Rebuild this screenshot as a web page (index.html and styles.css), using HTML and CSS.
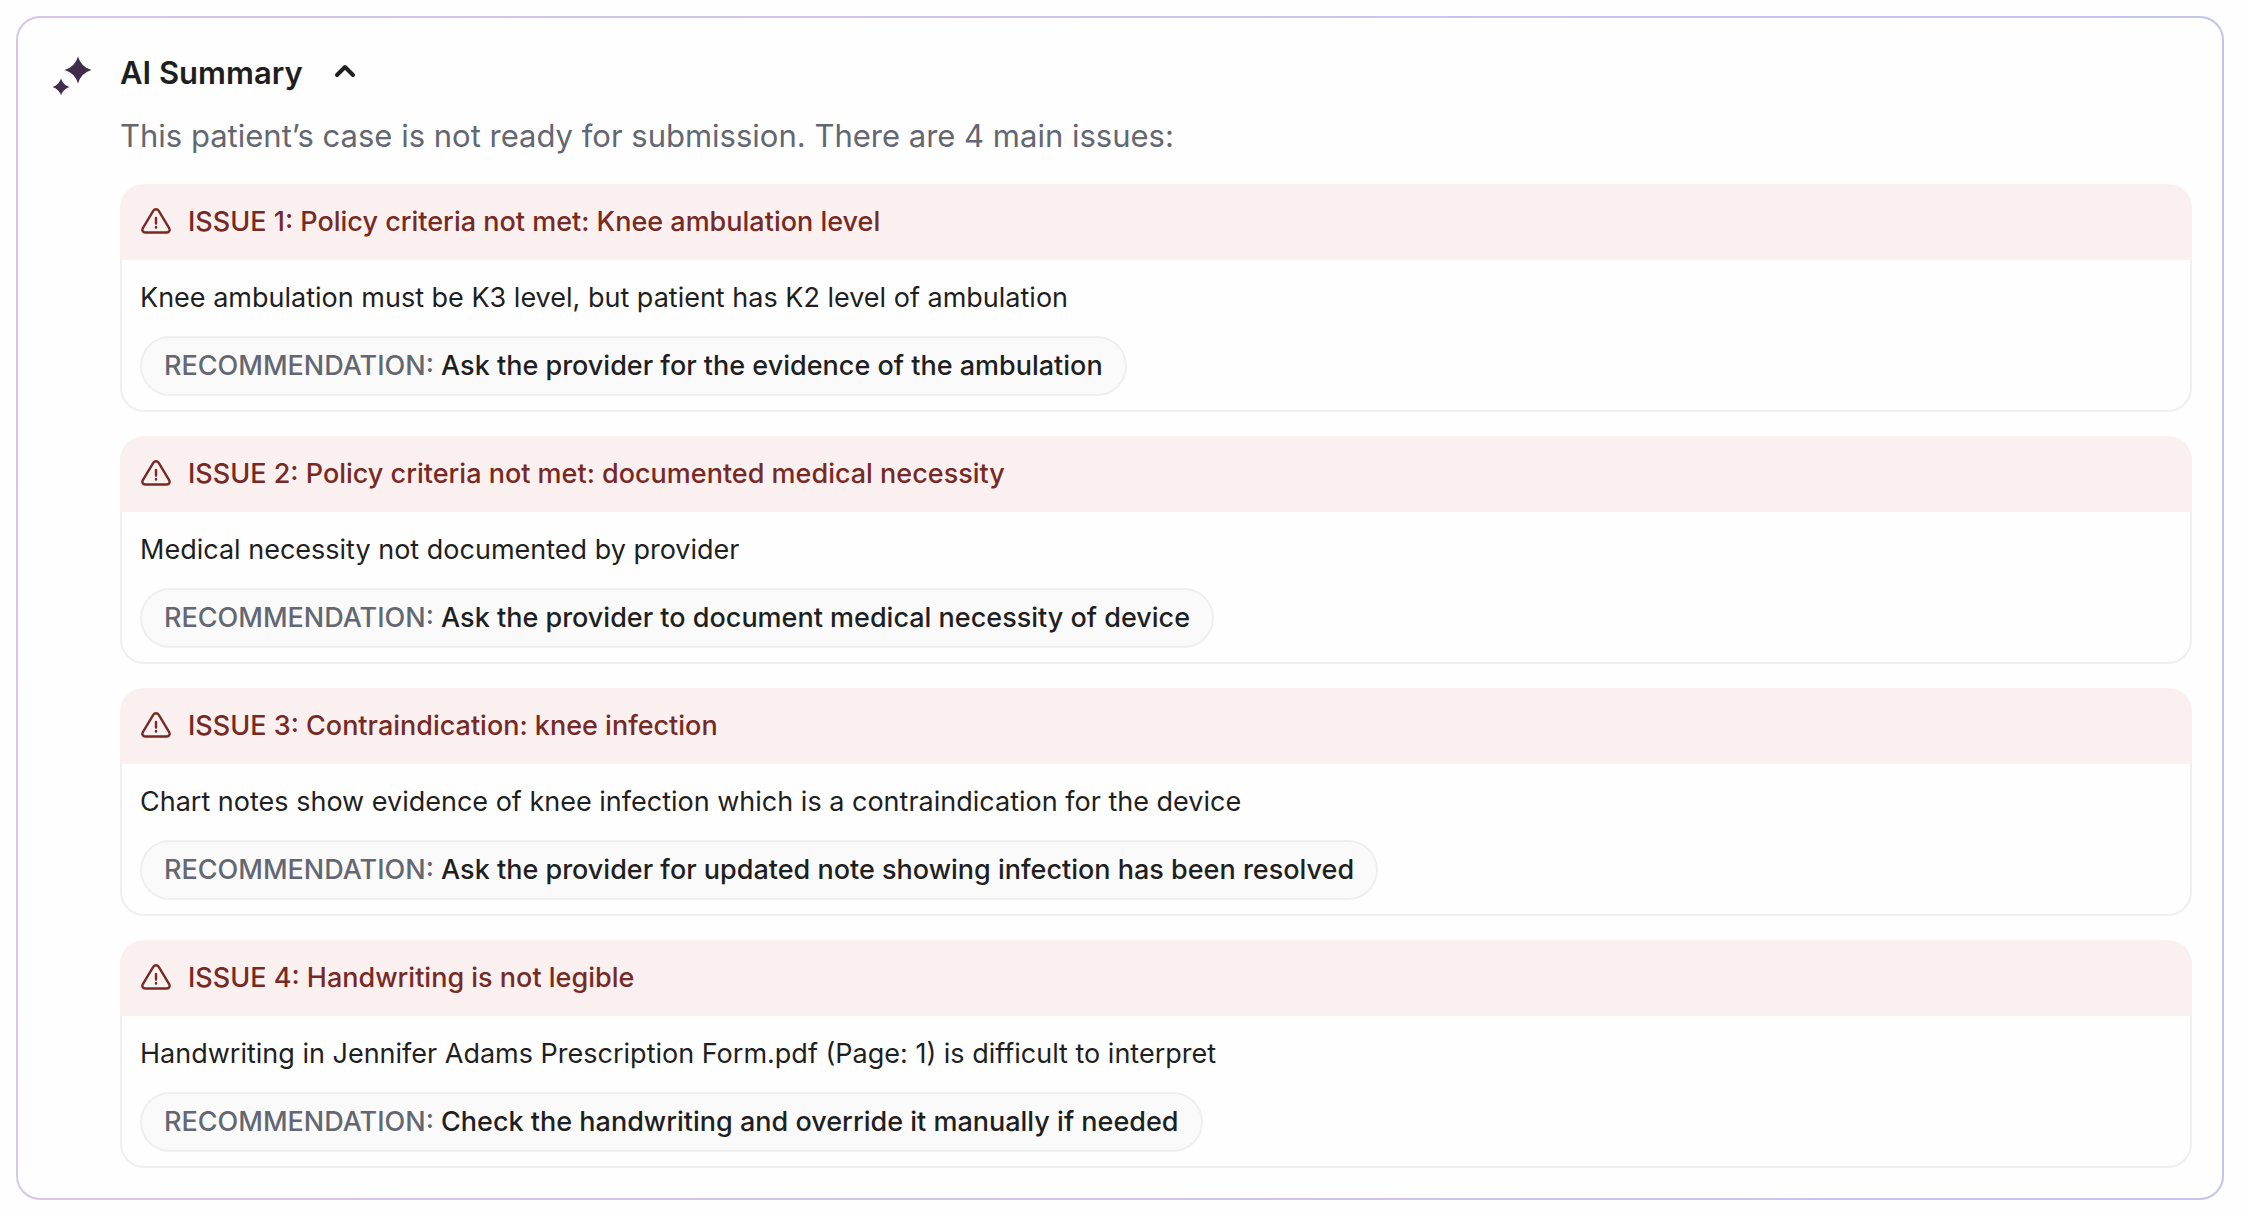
FILE: index.html
```html
<!DOCTYPE html>
<html lang="en">
<head>
    <meta charset="UTF-8">
    <meta name="viewport" content="width=device-width, initial-scale=1.0">
    <title>AI Summary</title>
    <link rel="stylesheet" href="styles.css">
</head>
<body>
    <svg class="sprite" aria-hidden="true">
        <symbol id="icon-alert" viewBox="0 0 32 32">
            <path d="M13.4 4.700 2.700 22.300a2.800 2.800 0 0 0 2.400 4.200h21.800a2.800 2.800 0 0 0 2.400-4.200L18.600 4.700a3 3 0 0 0-5.200 0Z"/>
            <path d="M16 12v5.500M16 21v.5"/>
        </symbol>
    </svg>

    <section class="summary">
        <svg class="sparkle-icon" viewBox="0 0 44 44" aria-hidden="true">
            <path d="M30 8.500Q33 19 43.500 22 33 25 30 35.500 27 25 16.500 22 27 19 30 8.500Z"/>
            <path d="M13 30.500Q15 37 21.500 39 15 41 13 47.500 11 41 4.500 39 11 37 13 30.500Z"/>
        </svg>

        <div class="summary-content">
            <h2 class="summary-title">
                <button class="toggle-btn" type="button" aria-expanded="true" aria-controls="issues">
                    AI Summary
                    <svg class="chevron-icon" viewBox="0 0 24 24" aria-hidden="true">
                        <path d="M4 14 12 6l8 8"/>
                    </svg>
                </button>
            </h2>
            <p class="summary-text">This patient’s case is not ready for submission. There are 4 main issues:</p>

            <div class="issues" id="issues">
                <article class="issue">
                    <h3 class="issue-header">
                        <svg class="alert-icon" aria-hidden="true"><use href="#icon-alert"/></svg>
                        ISSUE 1: Policy criteria not met: Knee ambulation level
                    </h3>
                    <div class="issue-body">
                        <p>Knee ambulation must be K3 level, but patient has K2 level of ambulation</p>
                        <p class="recommendation"><span class="label">RECOMMENDATION:</span> Ask the provider for the evidence of the ambulation</p>
                    </div>
                </article>

                <article class="issue">
                    <h3 class="issue-header">
                        <svg class="alert-icon" aria-hidden="true"><use href="#icon-alert"/></svg>
                        ISSUE 2: Policy criteria not met: documented medical necessity
                    </h3>
                    <div class="issue-body">
                        <p>Medical necessity not documented by provider</p>
                        <p class="recommendation"><span class="label">RECOMMENDATION:</span> Ask the provider to document medical necessity of device</p>
                    </div>
                </article>

                <article class="issue">
                    <h3 class="issue-header">
                        <svg class="alert-icon" aria-hidden="true"><use href="#icon-alert"/></svg>
                        ISSUE 3: Contraindication: knee infection
                    </h3>
                    <div class="issue-body">
                        <p>Chart notes show evidence of knee infection which is a contraindication for the device</p>
                        <p class="recommendation"><span class="label">RECOMMENDATION:</span> Ask the provider for updated note showing infection has been resolved</p>
                    </div>
                </article>

                <article class="issue">
                    <h3 class="issue-header">
                        <svg class="alert-icon" aria-hidden="true"><use href="#icon-alert"/></svg>
                        ISSUE 4: Handwriting is not legible
                    </h3>
                    <div class="issue-body">
                        <p>Handwriting in Jennifer Adams Prescription Form.pdf (Page: 1) is difficult to interpret</p>
                        <p class="recommendation"><span class="label">RECOMMENDATION:</span> Check the handwriting and override it manually if needed</p>
                    </div>
                </article>
            </div>
        </div>
    </section>

    <script>
        // Collapse / expand the list of issues
        const toggle = document.querySelector('.toggle-btn');
        const issues = document.getElementById('issues');

        toggle.addEventListener('click', () => {
            issues.hidden = !issues.hidden;
            toggle.setAttribute('aria-expanded', String(!issues.hidden));
        });
    </script>
</body>
</html>
```

FILE: styles.css
```css
* {
    margin: 0;
    padding: 0;
    box-sizing: border-box;
}

body {
    padding: 16px 24px 16px 16px;
    font-family: Inter, "Liberation Sans", sans-serif;
    font-size: 27px;
    line-height: 40px;
    color: #1f1f1f;
    background: #fefefe;
}

.sprite {
    display: none;
}

/* Panel with gradient outline */
.summary {
    display: flex;
    gap: 28px;
    padding: 30px;
    border: 2px solid transparent;
    border-radius: 24px;
    background:
        linear-gradient(#fefefe, #fefefe) padding-box,
        linear-gradient(75deg, #d9c5e8, #c3c2ee) border-box;
}

.sparkle-icon {
    flex: none;
    width: 44px;
    height: 44px;
    fill: #3f2e4b;
    overflow: visible;
}

.summary-content {
    flex: 1;
    min-width: 0;
}

.summary-title {
    font-size: 31px;
    line-height: 50px;
}

.toggle-btn {
    display: flex;
    align-items: center;
    gap: 30px;
    border: none;
    background: none;
    font: inherit;
    font-weight: 600;
    color: inherit;
    cursor: pointer;
}

.chevron-icon {
    width: 24px;
    height: 24px;
    fill: none;
    stroke: currentColor;
    stroke-width: 4;
    stroke-linecap: round;
    stroke-linejoin: round;
}

.toggle-btn[aria-expanded="false"] .chevron-icon {
    transform: rotate(180deg);
}

.summary-text {
    margin-top: 18px;
    font-size: 31px;
    color: #636772;
}

/* Issue cards */
.issues {
    display: flex;
    flex-direction: column;
    gap: 24px;
    margin-top: 28px;
}

.issues[hidden] {
    display: none;
}

.issue-header {
    display: flex;
    align-items: center;
    gap: 16px;
    padding: 18px 20px;
    border-radius: 24px 24px 0 0;
    background: #faf0ef;
    font-size: 27px;
    font-weight: 500;
    color: #772a25;
}

.alert-icon {
    flex: none;
    width: 32px;
    height: 32px;
    fill: none;
    stroke: currentColor;
    stroke-width: 2.4;
    stroke-linecap: round;
    stroke-linejoin: round;
}

.issue-body {
    display: flex;
    flex-direction: column;
    align-items: flex-start;
    gap: 18px;
    padding: 18px 18px 14px;
    border: 2px solid #efefef;
    border-top: none;
    border-radius: 0 0 24px 24px;
}

.recommendation {
    padding: 8px 22px;
    border: 2px solid #efefef;
    border-radius: 30px;
    background: #fafafa;
    font-weight: 500;
}

.label {
    color: #636772;
}

.toggle-btn:focus-visible {
    outline: 2px solid #c3c2ee;
    outline-offset: 4px;
}
```
